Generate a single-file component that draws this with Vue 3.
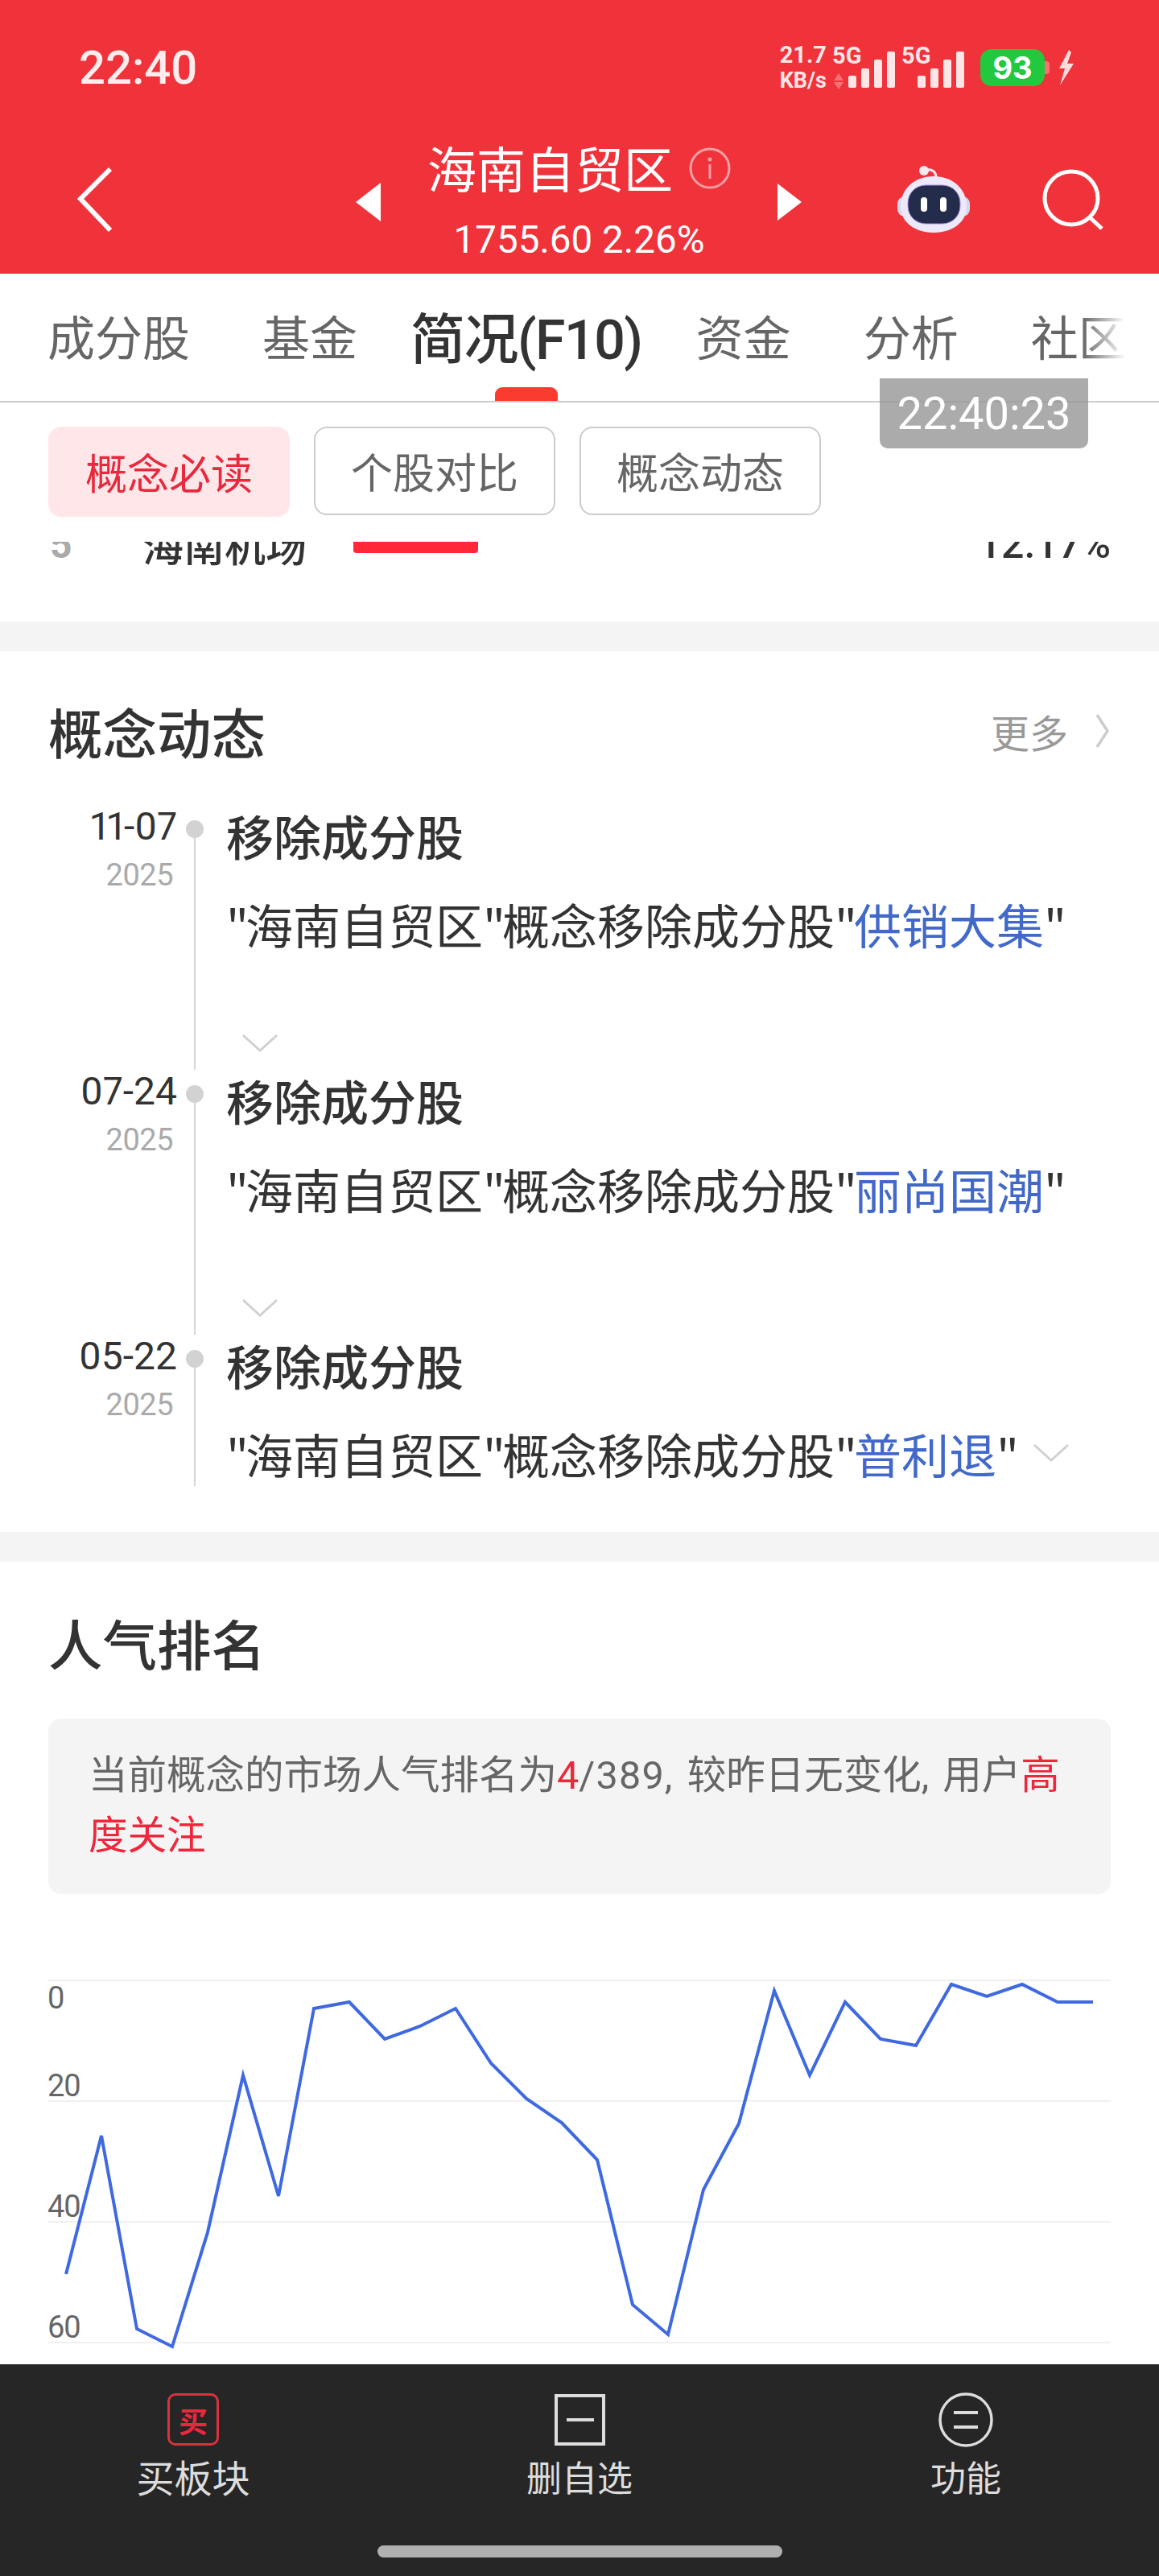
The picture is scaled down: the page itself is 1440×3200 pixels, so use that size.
<script setup>
const tabs = [
  { name: '成分股' },
  { name: '基金' },
  { name: '简况(F10)', active: true },
  { name: '资金' },
  { name: '分析' },
  { name: '社区' },
]

const pills = [
  { name: '概念必读', active: true },
  { name: '个股对比' },
  { name: '概念动态' },
]

const bars = [
  { x: 20, y: 37 },
  { x: 36, y: 28 },
  { x: 52, y: 17 },
  { x: 68, y: 7 },
]

const news = [
  { date: '11-07', year: '2025', stock: '供销大集' },
  { date: '07-24', year: '2025', stock: '丽尚国潮' },
  { date: '05-22', year: '2025', stock: '普利退', last: true },
]

const grid = [
  { y: 2460, label: '0', labelY: 2495 },
  { y: 2610, label: '20', labelY: 2604 },
  { y: 2760, label: '40', labelY: 2754 },
  { y: 2910, label: '60', labelY: 2904 },
]

const ranks = [
  2825, 2653, 2893, 2915, 2773, 2578, 2728, 2495, 2487, 2533,
  2517, 2495, 2563, 2607, 2637, 2683, 2863, 2900, 2720, 2638,
  2473, 2578, 2487, 2533, 2541, 2465, 2480, 2465, 2487, 2487,
]
const linePoints = ranks.map((y, i) => `${82 + i * 44},${y}`).join(' ')
</script>

<template>
  <div class="phone">
    <header class="top">
      <div class="status">
        <span class="clock">22:40</span>
        <div class="status-right">
          <div class="speed"><span>21.7</span><span class="unit">KB/s</span></div>
          <svg v-for="n in 2" :key="n" class="signal" width="78" height="60" viewBox="0 -6 78 60">
            <text x="0" y="22" class="signal-text">5G</text>
            <template v-if="n === 1">
              <path d="M2 43 L8 34 L14 43 Z M2 45 L14 45 L8 54 Z" fill="#f87075" />
            </template>
            <rect v-for="b in bars" :key="b.x" :x="b.x" :y="b.y" width="10" :height="52 - b.y" rx="2" fill="#ffe6e6" />
          </svg>
          <div class="battery"><span class="battery-level">93</span><i class="battery-nub"></i></div>
          <svg class="bolt" width="21" height="44" viewBox="0 0 21 44">
            <path d="M14 0 L2 23 L9 23 L3 44 L20 17 L12 17 L17 3 Z" fill="#ffdcdc" />
          </svg>
        </div>
      </div>
      <div class="nav">
        <svg class="back" width="56" height="84" viewBox="0 0 56 84">
          <path d="M47 4 L10 41 L47 80" fill="none" stroke="#fff" stroke-width="6" />
        </svg>
        <svg class="tri-left" width="31" height="48" viewBox="0 0 31 48"><path d="M31 0 V48 L0 24 Z" fill="#fff" /></svg>
        <div class="concept">
          <div class="concept-name">
            <span>海南自贸区</span>
            <svg class="info" width="52" height="52" viewBox="0 0 52 52">
              <circle cx="26" cy="26" r="24" fill="none" stroke="#f9a0a4" stroke-width="3" />
              <circle cx="26" cy="15" r="2.5" fill="#f9a0a4" />
              <rect x="24.5" y="21" width="3" height="18" fill="#f9a0a4" />
            </svg>
          </div>
          <div class="concept-price">1755.60 2.26%</div>
        </div>
        <svg class="tri-right" width="30" height="46" viewBox="0 0 30 46"><path d="M0 0 V46 L30 23 Z" fill="#fff" /></svg>
        <svg class="robot" width="90" height="84" viewBox="0 0 90 84">
          <circle cx="33" cy="6" r="6" fill="#f4e9ef" />
          <path d="M36 5 C44 4 48 8 48 14" fill="none" stroke="#f4e9ef" stroke-width="3" />
          <rect x="0" y="38" width="90" height="25" rx="9" fill="#d5d6f0" />
          <path d="M45 13 C70 13 86 30 86 50 C86 72 66 83 45 83 C24 83 4 72 4 50 C4 30 20 13 45 13 Z" fill="#eceafa" />
          <rect x="13" y="24" width="65" height="48" rx="22" fill="#232d4b" stroke="#a98fe0" stroke-width="1" />
          <rect x="29" y="39" width="8" height="18" rx="4" fill="#fff" />
          <rect x="53" y="39" width="8" height="18" rx="4" fill="#fff" />
        </svg>
        <svg class="search" width="76" height="76" viewBox="0 0 76 76">
          <circle cx="36" cy="36" r="33" fill="none" stroke="#fff" stroke-width="5" />
          <path d="M60 61 L74 74" stroke="#fff" stroke-width="5" />
        </svg>
      </div>
    </header>

    <nav class="tabs">
      <span v-for="t in tabs" :key="t.name" class="tab" :class="{ 'tab-active': t.active }">
        {{ t.name }}
        <i v-if="t.active" class="tab-mark"></i>
      </span>
      <i class="tabs-fade"></i>
    </nav>

    <div class="pills">
      <span v-for="p in pills" :key="p.name" class="pill" :class="{ 'pill-active': p.active }">{{ p.name }}</span>
    </div>

    <main class="scroll">
      <section class="peek">
        <div class="peek-row">
          <span class="peek-no">5</span>
          <span class="peek-name">海南机场</span>
          <i class="peek-bar"></i>
          <span class="peek-pct">12.17%</span>
        </div>
      </section>

      <section class="block news">
        <div class="block-head">
          <h2>概念动态</h2>
          <span class="more">更多
            <svg width="18" height="44" viewBox="0 0 18 44"><path d="M2 2 L15 22 L2 42" fill="none" stroke="#ccc" stroke-width="3.5" /></svg>
          </span>
        </div>
        <div class="timeline">
          <div v-for="n in news" :key="n.date" class="item" :class="{ 'item-last': n.last }">
            <div class="when">
              <div class="date">{{ n.date }}</div>
              <div class="year">{{ n.year }}</div>
            </div>
            <div class="axis"><i class="dot"></i></div>
            <div class="what">
              <div class="what-title">移除成分股</div>
              <div class="what-body">
                <span class="q">"</span>海南自贸区<span class="q">"</span>概念移除成分股<span class="q">"</span><span class="link">{{ n.stock }}</span><span class="q">"</span>
                <svg v-if="n.last" class="fold-inline" width="44" height="24" viewBox="0 0 44 24"><path d="M1 2 L22 21 L43 2" fill="none" stroke="#d0d0d0" stroke-width="3" /></svg>
              </div>
              <svg v-if="!n.last" class="fold" width="44" height="24" viewBox="0 0 44 24"><path d="M1 2 L22 21 L43 2" fill="none" stroke="#d0d0d0" stroke-width="3" /></svg>
            </div>
          </div>
        </div>
      </section>

      <section class="block rank">
        <h2>人气排名</h2>
        <p class="notice">当前概念的市场人气排名为<span class="hot">4</span><span class="num">/389,</span> 较昨日无变化, 用户<span class="hot">高度关注</span></p>
        <svg class="chart" width="1320" height="487" viewBox="60 2450 1320 487">
          <g v-for="g in grid" :key="g.y">
            <line x1="60" x2="1380" :y1="g.y" :y2="g.y" stroke="#f0f0f0" stroke-width="2" />
            <text x="59" :y="g.labelY" class="axis-label">{{ g.label }}</text>
          </g>
          <polyline :points="linePoints" fill="none" stroke="#3f69e0" stroke-width="4" />
        </svg>
      </section>
    </main>

    <footer class="bottom">
      <div class="actions">
        <div class="action">
          <span class="buy-icon">买</span>
          <span class="action-label action-label-big">买板块</span>
        </div>
        <div class="action">
          <svg width="68" height="68" viewBox="0 0 68 68">
            <rect x="5" y="4" width="59" height="60" fill="none" stroke="#ddd" stroke-width="4" />
            <path d="M18 34 H52" stroke="#ddd" stroke-width="4" />
          </svg>
          <span class="action-label">删自选</span>
        </div>
        <div class="action">
          <svg width="68" height="68" viewBox="0 0 68 68">
            <circle cx="34" cy="34" r="32" fill="none" stroke="#ddd" stroke-width="3.5" />
            <path d="M19 25 H49 M19 43 H49" stroke="#ddd" stroke-width="4" />
          </svg>
          <span class="action-label">功能</span>
        </div>
      </div>
      <i class="home-bar"></i>
    </footer>

    <div class="stamp">22:40:23</div>
  </div>
</template>

<style>
html, body {
  margin: 0;
  background: #fff;
}
</style>

<style scoped>
.phone {
  position: relative;
  width: 1440px;
  height: 3200px;
  display: flex;
  flex-direction: column;
  overflow: hidden;
  background: #fff;
  font-family: Roboto, "Noto Sans CJK SC", sans-serif;
  color: #333;
}

/* red header */
.top {
  height: 340px;
  flex: none;
  background: #f0323b;
  color: #fff;
}
.status {
  height: 168px;
  display: flex;
  align-items: center;
  padding: 0 105px 0 98px;
}
.clock {
  font-size: 58px;
  font-weight: 500;
  color: #ffecec;
}
.status-right {
  margin-left: auto;
  display: flex;
  align-items: center;
}
.speed {
  display: flex;
  flex-direction: column;
  align-items: center;
  font-size: 29px;
  font-weight: 700;
  line-height: 32px;
  color: #ffe6e6;
  margin-right: 7px;
}
.speed .unit {
  font-size: 27px;
}
.signal {
  margin: -6px 8px 0 0;
}
.signal-text {
  font-family: Roboto, sans-serif;
  font-size: 29px;
  font-weight: 700;
  fill: #ffe6e6;
}
.battery {
  position: relative;
  width: 80px;
  height: 46px;
  margin: 0 16px 0 12px;
  border-radius: 14px;
  background: #22c93f;
  display: flex;
  align-items: center;
  justify-content: center;
}
.battery-level {
  font-family: Inter, sans-serif;
  font-size: 38px;
  font-weight: 700;
  color: #fff;
}
.battery-nub {
  position: absolute;
  right: -6px;
  top: 15px;
  width: 6px;
  height: 16px;
  border-radius: 0 4px 4px 0;
  background: #f87075;
}
.nav {
  height: 160px;
  display: flex;
  align-items: center;
  padding-left: 90px;
}
.tri-left {
  margin: 6px 0 0 296px;
  flex: none;
}
.tri-right {
  margin-top: 6px;
  flex: none;
}
.concept {
  width: 493px;
  flex: none;
  margin-top: 4px;
  display: flex;
  flex-direction: column;
  align-items: center;
}
.concept-name {
  display: flex;
  align-items: center;
  gap: 20px;
  height: 70px;
  font-size: 61px;
  font-family: "Noto Sans CJK SC", sans-serif;
}
.info {
  margin-top: 2px;
}
.concept-price {
  margin-top: 25px;
  line-height: 60px;
  font-size: 47.5px;
}
.robot {
  margin-left: 119px;
  flex: none;
}
.search {
  margin-left: 90px;
  flex: none;
}

/* tabs */
.tabs {
  position: relative;
  height: 160px;
  flex: none;
  box-sizing: border-box;
  border-bottom: 2px solid #ccc;
  display: flex;
  align-items: center;
  gap: 90px;
  padding: 0 0 6px 59px;
  overflow: hidden;
  white-space: nowrap;
  font-size: 59px;
  color: #666;
}
.tab-active {
  font-size: 68px;
  font-weight: 500;
  color: #333;
  margin: 0 -23px 0 -24px;
  letter-spacing: -1.5px;
}
.tab-mark {
  position: absolute;
  left: 615px;
  bottom: 0;
  width: 78px;
  height: 17px;
  border-radius: 9px 9px 0 0;
  background: #fb3b30;
}
.tabs-fade {
  position: absolute;
  top: 0;
  bottom: 0;
  right: 0;
  width: 95px;
  background: linear-gradient(to right, rgba(255, 255, 255, 0), rgba(255, 255, 255, 0.9) 50%, #fff);
}

.pills {
  height: 173px;
  flex: none;
  box-sizing: border-box;
  padding: 30px 0 0 60px;
  display: flex;
  align-items: flex-start;
  gap: 30px;
}
.pill {
  width: 300px;
  height: 110px;
  box-sizing: border-box;
  border: 2px solid #ccc;
  border-radius: 16px;
  padding-bottom: 2px;
  display: flex;
  align-items: center;
  justify-content: center;
  font-size: 52px;
  color: #666;
}
.pill-active {
  height: 112px;
  border: 0;
  background: #ffe6e9;
  color: #e8283c;
}

/* scrolling content */
.scroll {
  flex: 1;
  min-height: 0;
  overflow: hidden;
  background: #f4f4f4;
}
.peek {
  height: 99px;
  overflow: hidden;
  background: #fff;
}
.peek-row {
  position: relative;
  height: 80px;
  margin-top: -37px;
  padding: 0 60px;
  display: flex;
  align-items: center;
  justify-content: space-between;
}
.peek-no {
  width: 117px;
  box-sizing: border-box;
  font-size: 48px;
  font-weight: 700;
  color: #aaa;
  padding-left: 2px;
}
.peek-name {
  font-size: 51px;
  font-family: "Noto Sans CJK SC", sans-serif;
  font-weight: 500;
}
.peek-bar {
  width: 155px;
  height: 30px;
  margin: -8px 0 0 58px;
  border-radius: 4px;
  background: #ff2738;
}
.peek-pct {
  margin-left: auto;
  font-size: 50px;
  font-weight: 500;
}

.block {
  background: #fff;
  padding: 0 60px;
}
.block h2 {
  margin: 0;
  font-family: "Noto Sans CJK SC", sans-serif;
  font-size: 67.5px;
  line-height: 90px;
  font-weight: 500;
  color: #333;
}
.news {
  margin-top: 37px;
  padding: 54px 60px 65px;
}
.block-head {
  display: flex;
  justify-content: space-between;
  align-items: center;
  height: 90px;
}
.more {
  display: flex;
  align-items: center;
  gap: 34px;
  font-family: "Noto Sans CJK SC", sans-serif;
  font-size: 48px;
  color: #999;
  margin-right: 1px;
}
.timeline {
  margin-top: 47px;
}
.item {
  display: grid;
  grid-template-columns: 160px 44px 1fr;
  height: 329px;
}
.item-last {
  height: 180px;
}
.when {
  padding-top: 2px;
  text-align: right;
}
.date {
  font-size: 48px;
  line-height: 50px;
  font-variant-numeric: proportional-nums;
  color: #333;
}
.year {
  margin-top: 10px;
  padding-right: 5px;
  font-size: 38px;
  line-height: 50px;
  letter-spacing: -0.5px;
  color: #aaa;
}
.axis {
  position: relative;
}
.axis::after {
  content: "";
  position: absolute;
  left: 21px;
  top: 30px;
  bottom: 0;
  width: 2px;
  background: #d5d5d5;
}
.dot {
  position: absolute;
  left: 11px;
  top: 19px;
  width: 22px;
  height: 22px;
  border-radius: 50%;
  background: #d2d2d2;
  z-index: 1;
}
.what {
  margin-top: -2px;
  padding-left: 17px;
  font-family: "Noto Sans CJK SC", sans-serif;
}
.what-title {
  font-size: 59px;
  line-height: 80px;
  font-weight: 500;
  color: #333;
}
.what-body {
  margin-top: 30px;
  font-size: 59px;
  line-height: 80px;
  white-space: nowrap;
  color: #333;
}
.q {
  letter-spacing: -4px;
}
.link {
  color: #4269c9;
}
.fold {
  display: block;
  margin: 96px 0 0 20px;
}
.fold-inline {
  margin-left: 22px;
  vertical-align: 14px;
}

.rank {
  margin-top: 37px;
  padding-top: 55px;
  height: 1000px;
}
.notice {
  margin: 50px 0 0;
  box-sizing: border-box;
  height: 218px;
  padding: 33px 52px 35px 50px;
  border-radius: 16px;
  background: #f4f4f4;
  font-size: 48.5px;
  line-height: 75px;
  word-spacing: 5px;
  color: #666;
}
.num {
  letter-spacing: 1.2px;
}
.hot {
  color: #f0263c;
}
.chart {
  display: block;
  margin-top: 97px;
}
.axis-label {
  font-family: Roboto, sans-serif;
  font-size: 38px;
  letter-spacing: -1px;
  fill: #666;
}

/* dark action bar */
.bottom {
  height: 263px;
  flex: none;
  background: #262626;
  display: flex;
  flex-direction: column;
}
.actions {
  display: grid;
  grid-template-columns: repeat(3, 1fr);
  padding-top: 35px;
}
.action {
  display: flex;
  flex-direction: column;
  align-items: center;
  gap: 6px;
}
.action svg {
  display: block;
}
.buy-icon {
  width: 64px;
  height: 65px;
  margin: 1px 0 2px;
  box-sizing: border-box;
  border: 3px solid #d8323f;
  border-radius: 10px;
  display: flex;
  align-items: center;
  justify-content: center;
  font-family: "Noto Sans CJK SC", sans-serif;
  font-size: 36px;
  font-weight: 700;
  color: #e8283c;
}
.action-label {
  font-family: "Noto Sans CJK SC", sans-serif;
  font-size: 44px;
  line-height: 60px;
  color: #ddd;
}
.action-label-big {
  font-size: 47px;
}
.home-bar {
  display: block;
  width: 503px;
  height: 15px;
  margin: 56px auto 0;
  border-radius: 8px;
  background: #b0b0b0;
}

.stamp {
  position: absolute;
  left: 1093px;
  top: 470px;
  width: 259px;
  height: 87px;
  border-radius: 0 0 10px 10px;
  background: rgba(150, 150, 150, 0.8);
  display: flex;
  align-items: center;
  justify-content: center;
  font-size: 56px;
  font-weight: 400;
  color: #fff;
}
</style>
